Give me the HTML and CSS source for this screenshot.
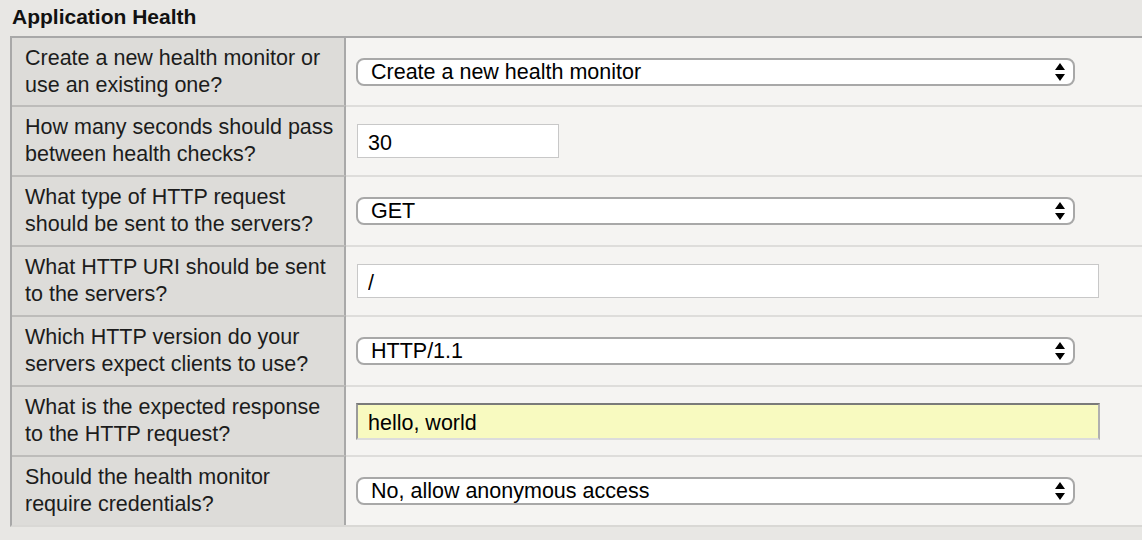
FILE: index.html
```html
<!DOCTYPE html>
<html>
<head>
<meta charset="utf-8">
<link rel="stylesheet" href="styles.css">
</head>
<body>
<h2 class="title">Application Health</h2>
<div class="form">
  <div class="row">
    <div class="label">Create a new health monitor or use an existing one?</div>
    <div class="field">
      <div class="select-wrap">
        <select class="select"><option>Create a new health monitor</option></select>
        <svg class="arrows" width="10" height="18" viewBox="0 0 10 18"><path d="M5 0 L10 7 L0 7 Z M0 11 L10 11 L5 18 Z" fill="#000"/></svg>
      </div>
    </div>
  </div>
  <div class="row">
    <div class="label">How many seconds should pass between health checks?</div>
    <div class="field"><input class="text short" type="text" value="30"></div>
  </div>
  <div class="row">
    <div class="label">What type of HTTP request should be sent to the servers?</div>
    <div class="field">
      <div class="select-wrap">
        <select class="select"><option>GET</option></select>
        <svg class="arrows" width="10" height="18" viewBox="0 0 10 18"><path d="M5 0 L10 7 L0 7 Z M0 11 L10 11 L5 18 Z" fill="#000"/></svg>
      </div>
    </div>
  </div>
  <div class="row">
    <div class="label">What HTTP URI should be sent to the servers?</div>
    <div class="field"><input class="text long" type="text" value="/"></div>
  </div>
  <div class="row">
    <div class="label">Which HTTP version do your servers expect clients to use?</div>
    <div class="field">
      <div class="select-wrap">
        <select class="select"><option>HTTP/1.1</option></select>
        <svg class="arrows" width="10" height="18" viewBox="0 0 10 18"><path d="M5 0 L10 7 L0 7 Z M0 11 L10 11 L5 18 Z" fill="#000"/></svg>
      </div>
    </div>
  </div>
  <div class="row">
    <div class="label">What is the expected response to the HTTP request?</div>
    <div class="field"><input class="text response" type="text" value="hello, world"></div>
  </div>
  <div class="row">
    <div class="label">Should the health monitor require credentials?</div>
    <div class="field">
      <div class="select-wrap">
        <select class="select"><option>No, allow anonymous access</option></select>
        <svg class="arrows" width="10" height="18" viewBox="0 0 10 18"><path d="M5 0 L10 7 L0 7 Z M0 11 L10 11 L5 18 Z" fill="#000"/></svg>
      </div>
    </div>
  </div>
</div>
</body>
</html>
```
FILE: styles.css
```css
html, body {
  margin: 0;
  padding: 0;
}
body {
  background: #e8e7e4;
  font-family: "Liberation Sans", Arial, sans-serif;
  color: #1a1a1a;
  overflow: hidden;
}
.title {
  margin: 0;
  padding: 4px 0 0 12px;
  height: 36px;
  box-sizing: border-box;
  font-size: 21px;
  font-weight: bold;
  color: #111;
  line-height: 26px;
}
.form {
  margin-left: 10px;
  border-top: 2px solid #a8a8a8;
  border-left: 2px solid #a8a8a8;
  border-bottom: 2px solid #d9d8d5;
  background: #f5f4f2;
}
.row {
  display: grid;
  grid-template-columns: 334px 1fr;
  height: 70px;
}
.row:first-child {
  height: 67px;
}
.row + .row .label {
  border-top: 2px solid #bdbcba;
}
.row + .row .field {
  border-top: 2px solid #dedddb;
}
.label {
  background: #dddcd9;
  border-right: 2px solid #a9a9a9;
  padding: 0 4px 0 13px;
  display: flex;
  align-items: center;
  font-size: 21.5px;
  line-height: 27px;
  color: #1c1c1c;
}
.field {
  display: flex;
  align-items: center;
  padding-left: 10px;
}
.select-wrap {
  position: relative;
  width: 719px;
  height: 28px;
}
.select {
  appearance: none;
  -webkit-appearance: none;
  width: 100%;
  height: 100%;
  box-sizing: border-box;
  border: 2px solid #a8a8a8;
  border-radius: 8px;
  background: #fff;
  font-family: "Liberation Sans", Arial, sans-serif;
  font-size: 21.5px;
  color: #000;
  padding: 0 0 0 13px;
  margin: 0;
}
.arrows {
  position: absolute;
  right: 10px;
  top: 5px;
}
.text {
  box-sizing: border-box;
  font-family: "Liberation Sans", Arial, sans-serif;
  font-size: 21.5px;
  color: #000;
  margin: 0;
  padding: 5px 0 0 10px;
  outline: none;
}
.short {
  width: 202px;
  height: 34px;
  border: 1px solid #c8c8c8;
  background: #fff;
  margin-left: 1px;
}
.long {
  width: 742px;
  height: 34px;
  border: 1px solid #c8c8c8;
  background: #fff;
  margin-left: 1px;
}
.response {
  width: 744px;
  height: 37px;
  background: #f8fac0;
  border-top: 2px solid #7a7a7a;
  border-left: 2px solid #9a9a9a;
  border-right: 2px solid #b0b0b0;
  border-bottom: 2px solid #dcdcdc;
  padding-left: 10px;
}
```
